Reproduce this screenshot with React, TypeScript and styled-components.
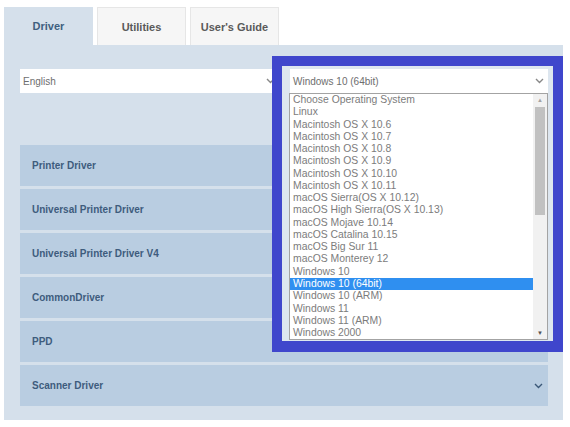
import styled, { createGlobalStyle } from 'styled-components';

const GlobalStyle = createGlobalStyle`
  html, body {
    margin: 0;
    padding: 0;
    background: #ffffff;
    font-family: 'Liberation Sans', Arial, sans-serif;
  }
`;

const tabs = ['Driver', 'Utilities', "User's Guide"];

const systems = [
  'Choose Operating System',
  'Linux',
  'Macintosh OS X 10.6',
  'Macintosh OS X 10.7',
  'Macintosh OS X 10.8',
  'Macintosh OS X 10.9',
  'Macintosh OS X 10.10',
  'Macintosh OS X 10.11',
  'macOS Sierra(OS X 10.12)',
  'macOS High Sierra(OS X 10.13)',
  'macOS Mojave 10.14',
  'macOS Catalina 10.15',
  'macOS Big Sur 11',
  'macOS Monterey 12',
  'Windows 10',
  'Windows 10 (64bit)',
  'Windows 10 (ARM)',
  'Windows 11',
  'Windows 11 (ARM)',
  'Windows 2000',
];

const sections = [
  'Printer Driver',
  'Universal Printer Driver',
  'Universal Printer Driver V4',
  'CommonDriver',
  'PPD',
  'Scanner Driver',
];

const Chevron = ({ color }: { color: string }) => (
  <svg width='9' height='6' viewBox='0 0 9 6'>
    <path d='M1 1l3.5 3.5L8 1' fill='none' stroke={color} strokeWidth='1.4' />
  </svg>
);

const App = () => {
  const selected = 'Windows 10 (64bit)';
  return (
    <>
      <GlobalStyle />
      <Page>
        <TabBar>
          {tabs.map((t, i) => (
            <Tab key={t} active={i === 0}>
              {t}
            </Tab>
          ))}
        </TabBar>
        <Panel>
          <SelectRow>
            <SelectBox tight>
              <span>English</span>
              <Chevron color='#888' />
            </SelectBox>
            <OsField>
              <Frame />
              <SelectBox raised>
                <span>{selected}</span>
                <Chevron color='#888' />
              </SelectBox>
              <ListBox>
                <Options>
                  {systems.map(s => (
                    <Option key={s} selected={s === selected}>
                      {s}
                    </Option>
                  ))}
                </Options>
                <ScrollBar>
                  <Arrow>▲</Arrow>
                  <Thumb />
                  <Arrow bottom>▼</Arrow>
                </ScrollBar>
              </ListBox>
            </OsField>
          </SelectRow>
          <Accordion>
            {sections.map(s => (
              <Row key={s}>
                <span>{s}</span>
                <Chevron color='#3b5878' />
              </Row>
            ))}
          </Accordion>
        </Panel>
      </Page>
    </>
  );
};

const Page = styled.div`
  padding: 7px 7px 9px 4px;
  width: 559px;
`;

const TabBar = styled.div`
  display: flex;
  gap: 4px;
`;

const Tab = styled.div<{ active?: boolean }>`
  width: 89px;
  height: 38px;
  box-sizing: border-box;
  display: flex;
  align-items: center;
  justify-content: center;
  font-size: 11px;
  font-weight: bold;
  color: ${p => (p.active ? '#40607f' : '#5a5a5a')};
  background: ${p => (p.active ? '#d5e0eb' : '#f6f6f6')};
  border: ${p => (p.active ? 'none' : '1px solid #e6e6e6')};
  border-bottom: none;
`;

const Panel = styled.div`
  background: #d5e0eb;
  padding: 24px 15px 14px 16px;
`;

const SelectRow = styled.div`
  display: flex;
  gap: 15px;
  margin-bottom: 52px;
`;

const SelectBox = styled.div<{ raised?: boolean; tight?: boolean }>`
  position: relative;
  z-index: ${p => (p.raised ? 3 : 'auto')};
  flex: 1;
  height: 24px;
  box-sizing: border-box;
  background: #fff;
  display: flex;
  align-items: center;
  justify-content: space-between;
  padding: 0 ${p => (p.tight ? '0' : '4px')} 0 3px;
  font-size: 10px;
  color: #6e6e6e;
`;

const OsField = styled.div`
  position: relative;
  width: 258px;
  display: flex;
`;

const Frame = styled.div`
  position: absolute;
  z-index: 2;
  top: -13px;
  left: -18px;
  width: 291px;
  height: 296px;
  box-sizing: border-box;
  border: 10px solid #3f46cc;
  border-bottom-width: 11px;
  background: #dde6ef;
`;

const ListBox = styled.div`
  position: absolute;
  z-index: 3;
  top: 24px;
  left: -1px;
  width: 259px;
  height: 247px;
  box-sizing: border-box;
  border: 1px solid #a3a3a3;
  background: #fff;
  display: flex;
`;

const Options = styled.div`
  flex: 1;
`;

const Option = styled.div<{ selected?: boolean }>`
  height: 12.28px;
  line-height: 12.28px;
  font-size: 10.4px;
  padding-left: 3px;
  white-space: nowrap;
  color: ${p => (p.selected ? '#fff' : '#7c7c7c')};
  background: ${p => (p.selected ? '#2f8ff0' : 'transparent')};
`;

const ScrollBar = styled.div`
  position: relative;
  width: 14px;
  background: #f1f1f1;
`;

const Arrow = styled.div<{ bottom?: boolean }>`
  position: absolute;
  left: 0;
  width: 14px;
  text-align: center;
  font-size: 6px;
  color: ${p => (p.bottom ? '#505050' : '#a3a3a3')};
  ${p => (p.bottom ? 'bottom: 3px;' : 'top: 3px;')}
`;

const Thumb = styled.div`
  position: absolute;
  top: 13px;
  left: 2px;
  width: 10px;
  height: 108px;
  background: #c1c1c1;
`;

const Accordion = styled.div`
  display: flex;
  flex-direction: column;
  gap: 3px;
`;

const Row = styled.div`
  height: 41px;
  background: #b9cde1;
  display: flex;
  align-items: center;
  justify-content: space-between;
  padding: 0 5px 0 12px;
  font-size: 10px;
  font-weight: bold;
  color: #3e5c7d;
`;

export default App;
